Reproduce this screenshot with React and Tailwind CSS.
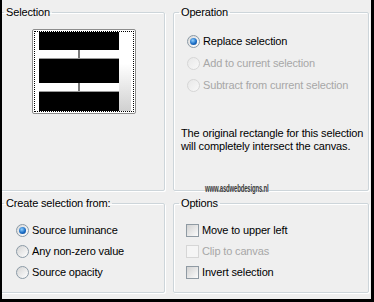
function Radio({ checked, disabled }) {
  if (checked) {
    return (
      <span className="flex h-[13px] w-[13px] shrink-0 items-center justify-center rounded-full border border-[#8b9aa6] bg-[linear-gradient(135deg,#d9d9d9,#ffffff)]">
        <span className="h-[7px] w-[7px] rounded-full bg-[radial-gradient(circle_at_40%_35%,#8fd0ff,#1a6cc4_55%,#0b3f86)]" />
      </span>
    );
  }
  return (
    <span
      className={
        disabled
          ? "h-[13px] w-[13px] shrink-0 rounded-full border border-[#d6d6d6] bg-[linear-gradient(135deg,#e8e8e8,#f8f8f8)]"
          : "h-[13px] w-[13px] shrink-0 rounded-full border border-[#8b9aa6] bg-[linear-gradient(135deg,#d4d4d4,#ffffff)]"
      }
    />
  );
}

function Check({ disabled }) {
  return (
    <span
      className={
        disabled
          ? "h-[13px] w-[13px] shrink-0 border border-[#d6d6d6] bg-[#f5f5f5]"
          : "h-[13px] w-[13px] shrink-0 border border-[#8f9aa3] bg-[linear-gradient(135deg,#d2d2d2,#fbfbfb)]"
      }
    />
  );
}

function Group({ title, legendClass, children }) {
  return (
    <fieldset className="min-w-0 rounded-[2px] border border-[#cdd5da] shadow-[inset_1px_1px_0_#ffffff,1px_1px_0_#ffffff]">
      <legend className={"px-[2px] leading-[13px] " + legendClass}>{title}</legend>
      {children}
    </fieldset>
  );
}

function Row({ children, h = "h-[22px]", dim }) {
  return (
    <div className={"flex items-center gap-[3px] whitespace-nowrap " + h + (dim ? " text-[#a7a7a7]" : " text-black")}>
      {children}
    </div>
  );
}

function Strip() {
  return (
    <div className="flex h-[9px] border-b border-[#9a9a9a] bg-white">
      <div className="flex-1" />
      <div className="w-[2px] bg-[#7a7a7a]" />
      <div className="flex-1" />
    </div>
  );
}

export default function App() {
  return (
    <div className="h-[302px] w-[374px] bg-black pb-[3px] pl-[2px] pr-[3px] font-['Liberation_Sans',Arial,sans-serif] text-[11px] tracking-[-0.15px] text-black">
      <div className="relative h-full overflow-hidden bg-[#efefef] pt-[6px]">
        <div className="ml-[-4px] grid grid-cols-[167px_196px] grid-rows-[185px_96px] gap-x-[8px] gap-y-[6px]">
          <Group title="Selection" legendClass="ml-[5px]">
            <div className="mt-[10px] pl-[33px]">
              <div className="h-[85px] w-[104px] rounded-[2px] border border-[#8c8c8c] bg-white p-[1px]">
                <div className="flex h-full border border-dotted border-black">
                  <div className="ml-[4px] flex w-[80px] shrink-0 flex-col">
                    <div className="h-[18px] bg-black" />
                    <Strip />
                    <div className="h-[24px] bg-black" />
                    <Strip />
                    <div className="flex-1 bg-black" />
                  </div>
                  <div className="w-[12px] shrink-0 bg-[linear-gradient(180deg,#ffffff_40%,#d0d0d0)]" />
                </div>
              </div>
            </div>
          </Group>

          <Group title="Operation" legendClass="ml-[5px]">
            <div className="mt-[11px] pl-[13px]">
              <Row>
                <Radio checked />
                <span>Replace selection</span>
              </Row>
              <Row dim>
                <Radio disabled />
                <span>Add to current selection</span>
              </Row>
              <Row dim>
                <Radio disabled />
                <span>Subtract from current selection</span>
              </Row>
            </div>
            <p className="mt-[31px] whitespace-nowrap pl-[7px] leading-[13px]">
              The original rectangle for this selection
              <br />
              will completely intersect the canvas.
            </p>
          </Group>

          <Group title="Create selection from:" legendClass="ml-[5px]">
            <div className="mt-[10px] pl-[17px]">
              <Row h="h-[21px]">
                <Radio checked />
                <span>Source luminance</span>
              </Row>
              <Row h="h-[21px]">
                <Radio />
                <span>Any non-zero value</span>
              </Row>
              <Row h="h-[21px]">
                <Radio />
                <span>Source opacity</span>
              </Row>
            </div>
          </Group>

          <Group title="Options" legendClass="ml-[5px]">
            <div className="mt-[10px] pl-[12px]">
              <Row h="h-[21px]">
                <Check />
                <span>Move to upper left</span>
              </Row>
              <Row h="h-[21px]" dim>
                <Check disabled />
                <span>Clip to canvas</span>
              </Row>
              <Row h="h-[21px]">
                <Check />
                <span>Invert selection</span>
              </Row>
            </div>
          </Group>
        </div>

        <span className="absolute left-[203px] top-[183px] origin-left scale-x-[0.6] whitespace-nowrap text-[10px] font-bold leading-[12px] tracking-[-0.3px] text-[#3a3a3a]">
          www.asdwebdesigns.nl
        </span>
      </div>
    </div>
  );
}
